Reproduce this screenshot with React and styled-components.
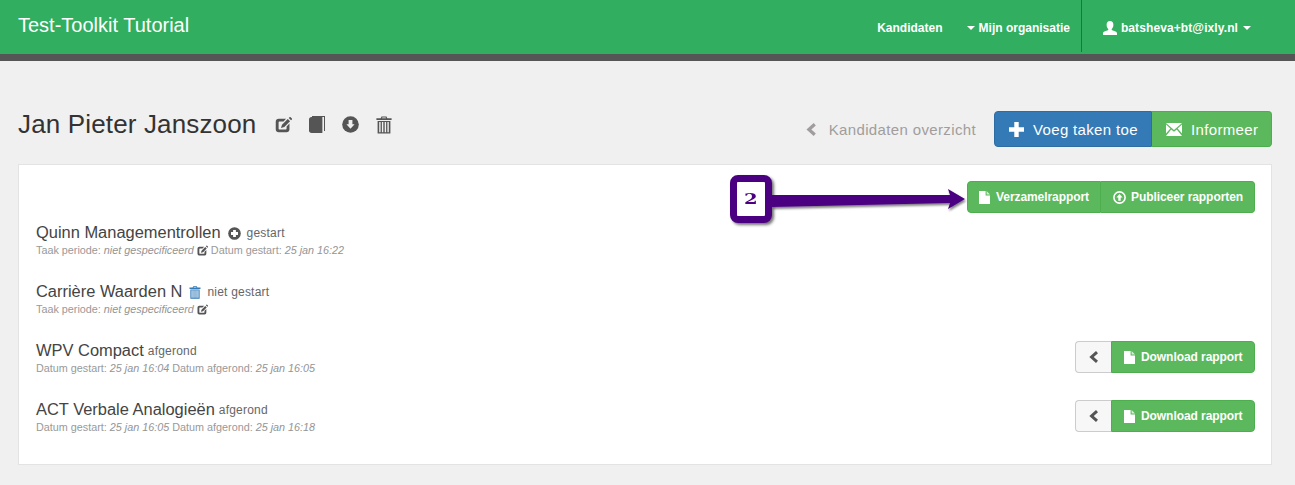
import React from 'react';
import styled, {createGlobalStyle} from "styled-components";

const GlobalStyle = createGlobalStyle`
  html, body {
    margin: 0;
    padding: 0;
    background: #f0f0f0;
    font-family: "Liberation Sans", Arial, sans-serif;
    color: #333;
  }
`
const Navbar = styled.nav`
  height: 54px;
  background: #31ae5f;
  border-bottom: 7px solid #555;
  display: flex;
  align-items: flex-start;
  justify-content: space-between;
  padding-left: 18px;
  padding-right: 44px;
`
const Brand = styled.div`
  color: #fff;
  font-size: 20px;
  line-height: 50px;
`
const NavLinks = styled.div`
  display: flex;
  align-items: flex-start;
  height: 52px;
`
const NavLink = styled.div`
  color: #fff;
  font-size: 12px;
  font-weight: 700;
  line-height: 56px;
  display: flex;
  align-items: center;
  height: 52px;
  padding-top: 4px;
  box-sizing: border-box;
  margin-left: ${p => p.$gap || 0}px;
`
const UserEmail = styled.span`
  letter-spacing: 0.1px;
`
const UserBadge = styled.span`
  display: inline-flex;
  margin-right: 4px;
`
const UserBlock = styled.div`
  margin-left: 11px;
  padding-left: 21px;
  height: 52px;
  border-left: 1px solid #555;
  display: flex;
`
const Caret = styled.span`
  display: inline-block;
  width: 0;
  height: 0;
  border-top: 4px solid #fff;
  border-left: 4px solid transparent;
  border-right: 4px solid transparent;
  margin-right: ${p => p.$right || 0}px;
  margin-left: ${p => p.$left || 0}px;
`
const PageHeader = styled.header`
  display: flex;
  align-items: center;
  justify-content: space-between;
  height: 36px;
  margin: 50px 23px 17px 18px;
`
const TitleGroup = styled.div`
  display: flex;
  align-items: center;
  margin-bottom: 9px;
`
const Title = styled.h1`
  margin: 0;
  font-size: 26px;
  font-weight: 400;
  letter-spacing: 0.15px;
  color: #333;
  margin-right: 19px;
`
const TitleIcons = styled.div`
  display: flex;
  align-items: center;
  gap: 17px;
  color: #555;
`
const HeaderActions = styled.div`
  display: flex;
  align-items: center;
`
const BackLink = styled.div`
  display: flex;
  align-items: center;
  gap: 11px;
  color: #a19d9d;
  font-size: 15px;
  margin-right: 18px;
  letter-spacing: 0.36px;
`
const ButtonGroup = styled.div`
  display: flex;
  margin-top: ${p => p.$top || 0}px;
`
const Button = styled.div`
  display: flex;
  align-items: center;
  box-sizing: border-box;
  height: ${p => p.$height}px;
  width: ${p => p.$width}px;
  padding-left: ${p => p.$pad}px;
  gap: ${p => p.$gap}px;
  color: #fff;
  background: ${p => p.$blue ? "#337ab7" : "#5cb85c"};
  border: 1px solid ${p => p.$blue ? "#2e6da4" : "#4cae4c"};
  font-size: ${p => p.$size}px;
  font-weight: ${p => p.$size < 15 ? 700 : 400};
  letter-spacing: ${p => p.$size < 15 ? "-0.07px" : "0.34px"};
  &:first-child {
    border-radius: 4px 0 0 4px;
  }
  &:last-child {
    border-radius: 0 4px 4px 0;
  }
  & + & {
    border-left: none;
  }
`
const BackButton = styled.div`
  display: flex;
  align-items: center;
  justify-content: center;
  box-sizing: border-box;
  width: 36px;
  height: 32px;
  background: #f7f7f7;
  border: 1px solid #ccc;
  border-right: none;
  border-radius: 4px 0 0 4px;
  color: #555;
`
const Panel = styled.section`
  position: relative;
  box-sizing: border-box;
  height: 301px;
  margin: 0 23px 0 18px;
  padding: 16px 16px 0 17px;
  background: #fff;
  border: 1px solid #e3e3e3;
`
const TopActions = styled.div`
  display: flex;
  justify-content: flex-end;
  margin-bottom: 9px;
`
const Row = styled.div`
  display: flex;
  justify-content: space-between;
  align-items: flex-start;
  height: 59px;
`
const RowName = styled.div`
  display: flex;
  align-items: center;
  height: 20px;
  font-size: 16.45px;
  color: #444;
`
const RowStatus = styled.span`
  display: inline-flex;
  align-items: center;
  font-size: 12px;
  color: #666;
  margin-left: ${p => p.$left || 4}px;
  margin-top: 2px;
  gap: 6px;
  letter-spacing: 0.2px;
`
const RowMeta = styled.div`
  display: flex;
  align-items: center;
  gap: 3px;
  height: 16px;
  font-size: 10.8px;
  color: #999;
  white-space: pre;
  em {
    color: #949494;
  }
`
const StatusIcon = styled.span`
  display: inline-flex;
  color: ${p => p.$color};
`
const Callout = styled.div`
  position: absolute;
  left: 711px;
  top: 10px;
  box-sizing: border-box;
  width: 42px;
  height: 48px;
  background: #fff;
  border: 7px solid #4b0082;
  border-radius: 8px;
  box-shadow: 2px 2px 3px rgba(0, 0, 0, .55);
  display: flex;
  align-items: center;
  justify-content: center;
  font-family: "DejaVu Serif", "Liberation Serif", serif;
  font-weight: 700;
  font-size: 14px;
  color: #4b0082;
`
const CalloutNumber = styled.span`
  display: inline-block;
  transform: scaleX(1.4);
`
const CalloutArrow = styled.svg`
  position: absolute;
  left: 753px;
  top: 16px;
`

const EditIcon = ({size = 16}) => (
    <svg width={size} height={size} viewBox="0 0 16 16" fill="currentColor">
        <path d="M3.5 2.5H10.4L8 5.2H4.1C3.7 5.2 3.4 5.5 3.4 5.9V11.9C3.4 12.3 3.7 12.6 4.1 12.6H10.2C10.6 12.6 10.9 12.3 10.9 11.9V9.8L13.6 7.1V12.5C13.6 14.2 12.5 15.3 10.8 15.3H3.5C1.8 15.3 .7 14.2 .7 12.5V5.3C.7 3.6 1.8 2.5 3.5 2.5Z"/>
        <path d="M12 2.8L14.2 5L8.8 10.4L5.6 11.4L6.6 8.2Z"/>
        <path d="M12.9 1.9L13.7 1.1C14 .8 14.4 .8 14.7 1.1L15.9 2.3C16.2 2.6 16.2 3 15.9 3.3L15.1 4.1Z"/>
    </svg>
)
const BookIcon = () => (
    <svg width="16" height="17" viewBox="0 0 16 17" fill="currentColor">
        <path d="M2.5 1H13.4V17H2.5C1 17 0 16 0 14.6V3.4C0 2 1 1 2.5 1Z"/>
        <path d="M3 0H16V15H15V1H3Z"/>
    </svg>
)
const CircleDownIcon = () => (
    <svg width="17" height="17" viewBox="0 0 17 17">
        <circle cx="8.5" cy="8.5" r="8.3" fill="currentColor"/>
        <path d="M6.6 4H10.4V8.2H12.6L8.5 12.8L4.4 8.2H6.6Z" fill="#f0f0f0"/>
    </svg>
)
const TrashIcon = ({size = 16, height = 18}) => (
    <svg width={size} height={height} viewBox="0 0 16 18" fill="currentColor">
        <path d="M5.5 0.5H10.5L11.3 2.2H15.6V4H0.4V2.2H4.7ZM6.3 1.5L6 2.2H10L9.7 1.5Z" fillRule="evenodd"/>
        <path d="M1.6 5H14.4V17.5H1.6ZM3.2 6V16.3H4.6V6ZM5.9 6V16.3H7.3V6ZM8.7 6V16.3H10.1V6ZM11.4 6V16.3H12.8V6Z" fillRule="evenodd"/>
    </svg>
)
const PlusIcon = () => (
    <svg width="15" height="15" viewBox="0 0 15 15" fill="currentColor">
        <path d="M5.3 0H9.7V5.3H15V9.7H9.7V15H5.3V9.7H0V5.3H5.3Z"/>
    </svg>
)
const EnvelopeIcon = () => (
    <svg width="16" height="13" viewBox="0 0 16 13" fill="currentColor">
        <path d="M0 0H16L8 7Z"/>
        <path d="M0 1.6L4.4 5.6L0 10.6Z"/>
        <path d="M16 1.6L11.6 5.6L16 10.6Z"/>
        <path d="M0 13L5.2 6.4L8 8.8L10.8 6.4L16 13Z"/>
    </svg>
)
const UserIcon = () => (
    <svg width="14" height="14" viewBox="0 0 14 14" fill="currentColor">
        <path d="M7 0C9.2 0 10.4 1.5 10.4 3.8C10.4 5.8 9.6 7.2 8.8 8.1C8.5 8.5 8.7 9 9.2 9.2L12.6 10.6C13.4 11 14 11.6 14 12.4V14H0V12.4C0 11.6 .6 11 1.4 10.6L4.8 9.2C5.3 9 5.5 8.5 5.2 8.1C4.4 7.2 3.6 5.8 3.6 3.8C3.6 1.5 4.8 0 7 0Z"/>
    </svg>
)
const FileIcon = () => (
    <svg width="11" height="13" viewBox="0 0 11 13">
        <path d="M0 0H6.6V4.4H11V13H0Z" fill="currentColor"/>
        <path d="M7.6 0L11 3.4H7.6Z" fill="currentColor" opacity=".75"/>
    </svg>
)
const CircleUpIcon = () => (
    <svg width="13" height="13" viewBox="0 0 13 13" fill="none">
        <circle cx="6.5" cy="6.5" r="5.6" stroke="currentColor" strokeWidth="1.6"/>
        <path d="M6.5 3L9.6 6.6H7.7V9.8H5.3V6.6H3.4Z" fill="currentColor"/>
    </svg>
)
const PlusCircleIcon = () => (
    <svg width="13" height="13" viewBox="0 0 13 13">
        <circle cx="6.5" cy="6.5" r="6.3" fill="currentColor"/>
        <path d="M5.1 3H7.9V5.1H10V7.9H7.9V10H5.1V7.9H3V5.1H5.1Z" fill="#fff"/>
    </svg>
)
const ChevronLeftIcon = ({size = 12}) => (
    <svg width={size} height={size} viewBox="0 0 12 12" fill="none" stroke="currentColor" strokeWidth="3">
        <path d="M9 1.2L3.6 6L9 10.8"/>
    </svg>
)

const DownloadGroup = () => (
    <ButtonGroup $top={1}>
        <BackButton><ChevronLeftIcon/></BackButton>
        <Button $height={32} $width={144} $pad={12} $gap={6} $size={12}><FileIcon/>Download rapport</Button>
    </ButtonGroup>
)

const App = () => {
    return (
        <>
            <GlobalStyle/>
            <Navbar>
                <Brand>Test-Toolkit Tutorial</Brand>
                <NavLinks>
                    <NavLink>Kandidaten</NavLink>
                    <NavLink $gap={24}><Caret $right={4}/>Mijn organisatie</NavLink>
                    <UserBlock>
                        <NavLink><UserBadge><UserIcon/></UserBadge><UserEmail>batsheva+bt@ixly.nl</UserEmail><Caret $left={5}/></NavLink>
                    </UserBlock>
                </NavLinks>
            </Navbar>
            <PageHeader>
                <TitleGroup>
                    <Title>Jan Pieter Janszoon</Title>
                    <TitleIcons>
                        <EditIcon size={17}/>
                        <BookIcon/>
                        <CircleDownIcon/>
                        <TrashIcon/>
                    </TitleIcons>
                </TitleGroup>
                <HeaderActions>
                    <BackLink><ChevronLeftIcon size={13}/>Kandidaten overzicht</BackLink>
                    <ButtonGroup>
                        <Button $blue $height={36} $width={158} $pad={14} $gap={9} $size={15}><PlusIcon/>Voeg taken toe</Button>
                        <Button $height={36} $width={120} $pad={14} $gap={9} $size={15}><EnvelopeIcon/>Informeer</Button>
                    </ButtonGroup>
                </HeaderActions>
            </PageHeader>
            <Panel>
                <Callout><CalloutNumber>2</CalloutNumber></Callout>
                <CalloutArrow width="200" height="34" viewBox="0 0 200 34">
                    <defs>
                        <filter id="arrowShadow" x="-5%" y="-40%" width="110%" height="200%">
                            <feDropShadow dx="1" dy="2" stdDeviation="1" floodColor="#000" floodOpacity=".5"/>
                        </filter>
                    </defs>
                    <path d="M0 14L178 14L176 8L193 18L176 28L178 22L0 26Z" fill="#4b0082" filter="url(#arrowShadow)"/>
                </CalloutArrow>
                <TopActions>
                    <ButtonGroup>
                        <Button $height={32} $width={134} $pad={11} $gap={6} $size={12}><FileIcon/>Verzamelrapport</Button>
                        <Button $height={32} $width={154} $pad={12} $gap={5} $size={12}><CircleUpIcon/>Publiceer rapporten</Button>
                    </ButtonGroup>
                </TopActions>
                <Row>
                    <div>
                        <RowName>Quinn Managementrollen
                            <RowStatus $left={7}><StatusIcon $color="#555"><PlusCircleIcon/></StatusIcon>gestart</RowStatus>
                        </RowName>
                        <RowMeta>
                            <span>Taak periode: <em>niet gespecificeerd</em></span>
                            <StatusIcon $color="#555"><EditIcon size={11}/></StatusIcon>
                            <span>Datum gestart: <em>25 jan 16:22</em></span>
                        </RowMeta>
                    </div>
                </Row>
                <Row>
                    <div>
                        <RowName>Carrière Waarden N
                            <RowStatus $left={7}><StatusIcon $color="#337ab7"><TrashIcon size={12} height={13}/></StatusIcon>niet gestart</RowStatus>
                        </RowName>
                        <RowMeta>
                            <span>Taak periode: <em>niet gespecificeerd</em></span>
                            <StatusIcon $color="#555"><EditIcon size={11}/></StatusIcon>
                        </RowMeta>
                    </div>
                </Row>
                <Row>
                    <div>
                        <RowName>WPV Compact<RowStatus>afgerond</RowStatus></RowName>
                        <RowMeta>
                            <span>Datum gestart: <em>25 jan 16:04</em> Datum afgerond: <em>25 jan 16:05</em></span>
                        </RowMeta>
                    </div>
                    <DownloadGroup/>
                </Row>
                <Row>
                    <div>
                        <RowName>ACT Verbale Analogieën<RowStatus>afgerond</RowStatus></RowName>
                        <RowMeta>
                            <span>Datum gestart: <em>25 jan 16:05</em> Datum afgerond: <em>25 jan 16:18</em></span>
                        </RowMeta>
                    </div>
                    <DownloadGroup/>
                </Row>
            </Panel>
        </>
    );
};

export default App;
